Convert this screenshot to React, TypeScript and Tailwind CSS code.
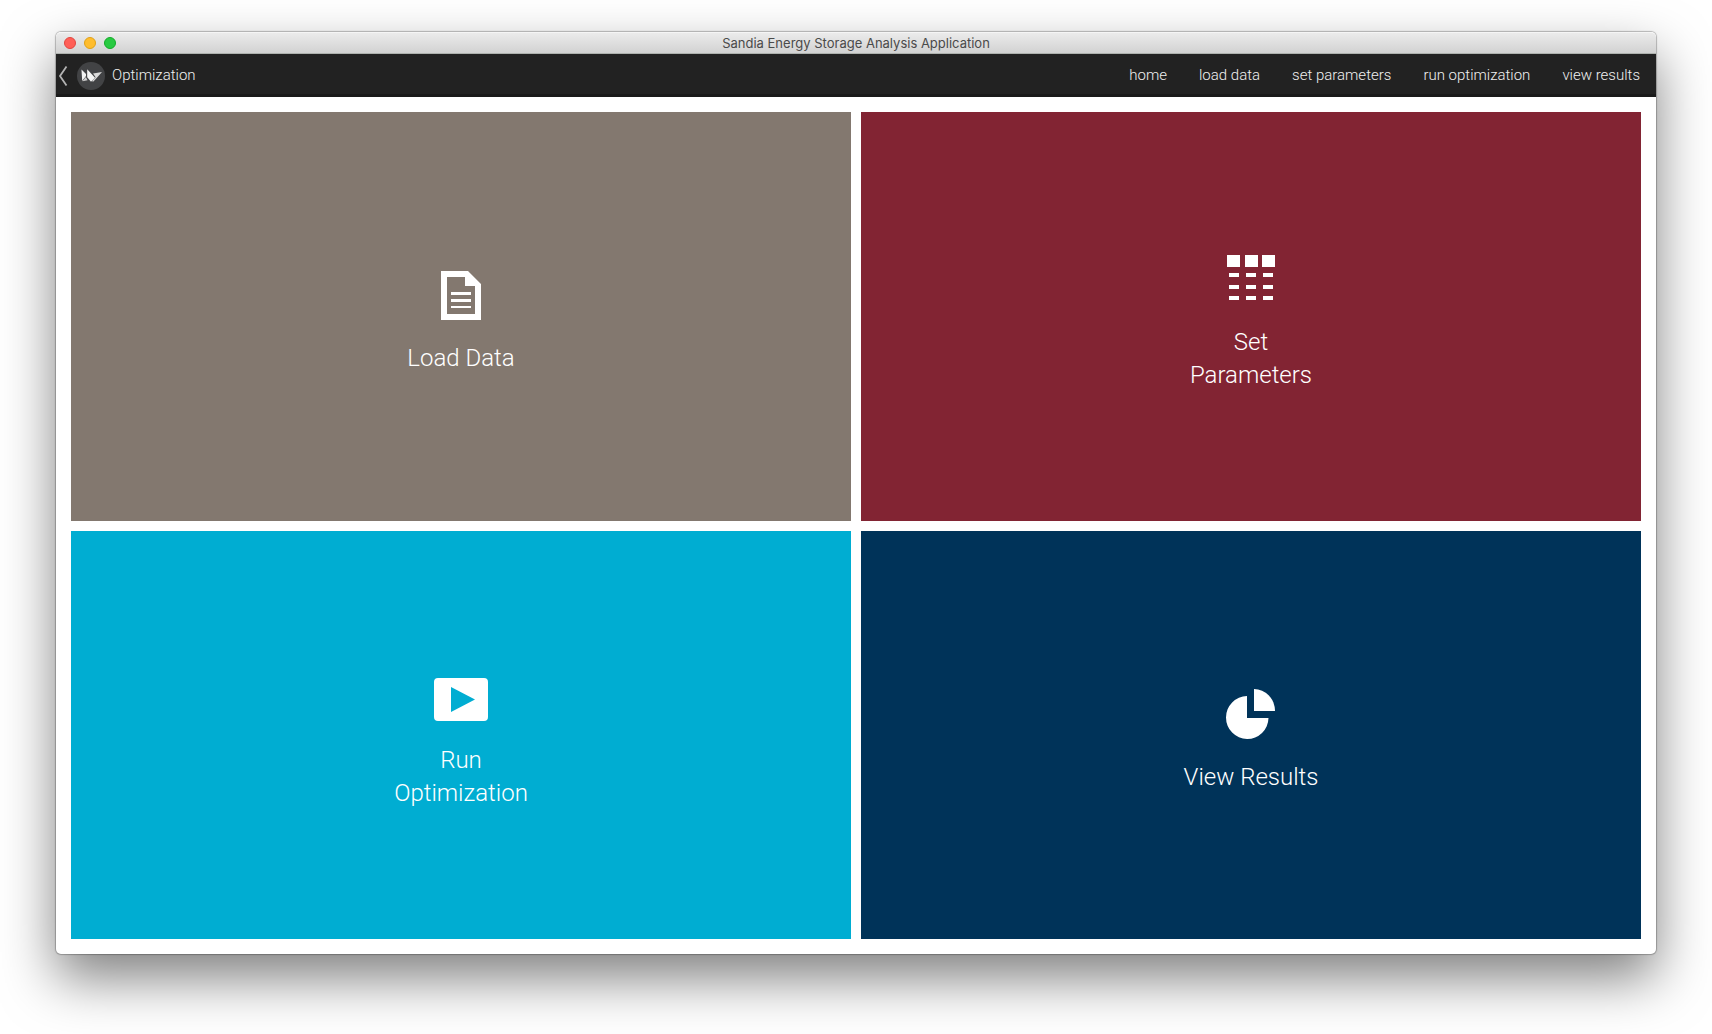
import React from "react";

const navItems = ["home", "load data", "set parameters", "run optimization", "view results"];

function DocumentIcon() {
  return (
    <svg viewBox="0 0 64 64" className="size-16" fill="currentColor" aria-hidden="true">
      <path
        fillRule="evenodd"
        d="M12 14H39L52 27V63H12ZM18 20V57H46V29H36V20Z"
      />
      <path d="M22 35h20v3H22zM22 42h20v3H22zM22 49h20v2H22z" />
    </svg>
  );
}

function TableIcon() {
  return (
    <svg viewBox="0 0 64 64" className="size-16" fill="currentColor" aria-hidden="true">
      <path d="M8 14h13v12H8zM26 14h13v12H26zM43 14h13v12H43z" />
      <path d="M10 32h10v4H10zM27 32h10v4H27zM44 32h10v4H44z" />
      <path d="M10 44h10v4H10zM27 44h10v4H27zM44 44h10v4H44z" />
      <path d="M10 55h10v4H10zM27 55h10v4H27zM44 55h10v4H44z" />
    </svg>
  );
}

function PlayIcon() {
  return (
    <svg viewBox="0 0 64 64" className="size-16" fill="currentColor" aria-hidden="true">
      <path
        fillRule="evenodd"
        d="M9 19H55Q59 19 59 23V58Q59 62 55 62H9Q5 62 5 58V23Q5 19 9 19ZM22 28V53L46 40.5Z"
      />
    </svg>
  );
}

function PieIcon() {
  return (
    <svg viewBox="0 0 64 64" className="size-16" fill="currentColor" aria-hidden="true">
      <path d="M28 20V42H49.500A21.250 21.500 0 1 1 28 20Z" />
      <path d="M35 13A21 22 0 0 1 56 35H35Z" />
    </svg>
  );
}

function BackIcon() {
  return (
    <svg viewBox="0 0 10 22" className="h-[22px] w-2.5" fill="none" stroke="#b4b4b4" strokeWidth="1.8" aria-hidden="true">
      <path d="M8.5 1.5L2 11L8.500 20.5" />
    </svg>
  );
}

function KivyLogo() {
  return (
    <svg viewBox="0 0 28 28" className="size-7" aria-hidden="true">
      <circle cx="14" cy="14" r="14" fill="#424345" />
      <path d="M4.500 7.500L9 12V14L5.200 19Z" fill="#f2f2f2" />
      <path d="M8.800 15L10.500 18.200L5.500 19.200Z" fill="#d0d0d0" />
      <path d="M10.200 7.300L18 15.800L14 19.700L10.200 15.200Z" fill="#f5f5f5" />
      <path d="M16 11.500L25 10L16.500 19.500L14.800 19.200L18.600 15.300Z" fill="#dadada" />
    </svg>
  );
}

const tiles = [
  { lines: ["Load Data"], color: "bg-[#83786f]", Icon: DocumentIcon },
  { lines: ["Set", "Parameters"], color: "bg-[#822433]", Icon: TableIcon },
  { lines: ["Run", "Optimization"], color: "bg-[#00add2]", Icon: PlayIcon },
  { lines: ["View Results"], color: "bg-[#003359]", Icon: PieIcon },
];

export default function App() {
  return (
    <div className="flex min-h-screen flex-col bg-white px-14 pt-8 pb-20 font-['Roboto',sans-serif]">
      <div className="flex grow flex-col rounded-[5px] bg-white shadow-[0_0_1px_1px_rgba(0,0,0,0.25),0_24px_54px_rgba(0,0,0,0.5)]">
        <div className="grid h-[22px] grid-cols-[1fr_auto_1fr] items-center rounded-t-[5px] border-t border-b border-t-[#f5f5f5] border-b-[#aeb2ae] bg-linear-to-b from-[#ebebeb] to-[#d2d2d2] px-2">
          <div className="flex gap-2">
            <button aria-label="Close" className="size-3 rounded-full border border-[#e2463f] bg-[#ff5f57]" />
            <button aria-label="Minimize" className="size-3 rounded-full border border-[#e1a116] bg-[#ffbd2e]" />
            <button aria-label="Zoom" className="size-3 rounded-full border border-[#12ac28] bg-[#28ca42]" />
          </div>
          <h1 className="font-['Inter',sans-serif] text-[13px] leading-5 text-[#4a4a4a]">
            Sandia Energy Storage Analysis Application
          </h1>
        </div>

        <header className="flex h-[43px] items-center justify-between bg-[#222222] pr-4 pl-0.5 text-[15px] font-light text-[#f0f0f0] shadow-[inset_0_-3px_0_#1a1a1a]">
          <button className="flex items-center">
            <BackIcon />
            <span className="ml-[9px]">
              <KivyLogo />
            </span>
            <span className="ml-[7px]">Optimization</span>
          </button>
          <nav className="flex gap-8">
            {navItems.map((item) => (
              <a key={item} href="#">
                {item}
              </a>
            ))}
          </nav>
        </header>

        <main className="grid grow auto-rows-fr grid-cols-2 gap-2.5 p-[15px]">
          {tiles.map(({ lines, color, Icon }) => (
            <button
              key={lines.join(" ")}
              className={`flex flex-col items-center justify-center text-2xl leading-[33px] font-light text-white ${color}`}
            >
              <span className="mb-[21px]">
                <Icon />
              </span>
              {lines.map((line) => (
                <span key={line}>{line}</span>
              ))}
            </button>
          ))}
        </main>
      </div>
    </div>
  );
}
